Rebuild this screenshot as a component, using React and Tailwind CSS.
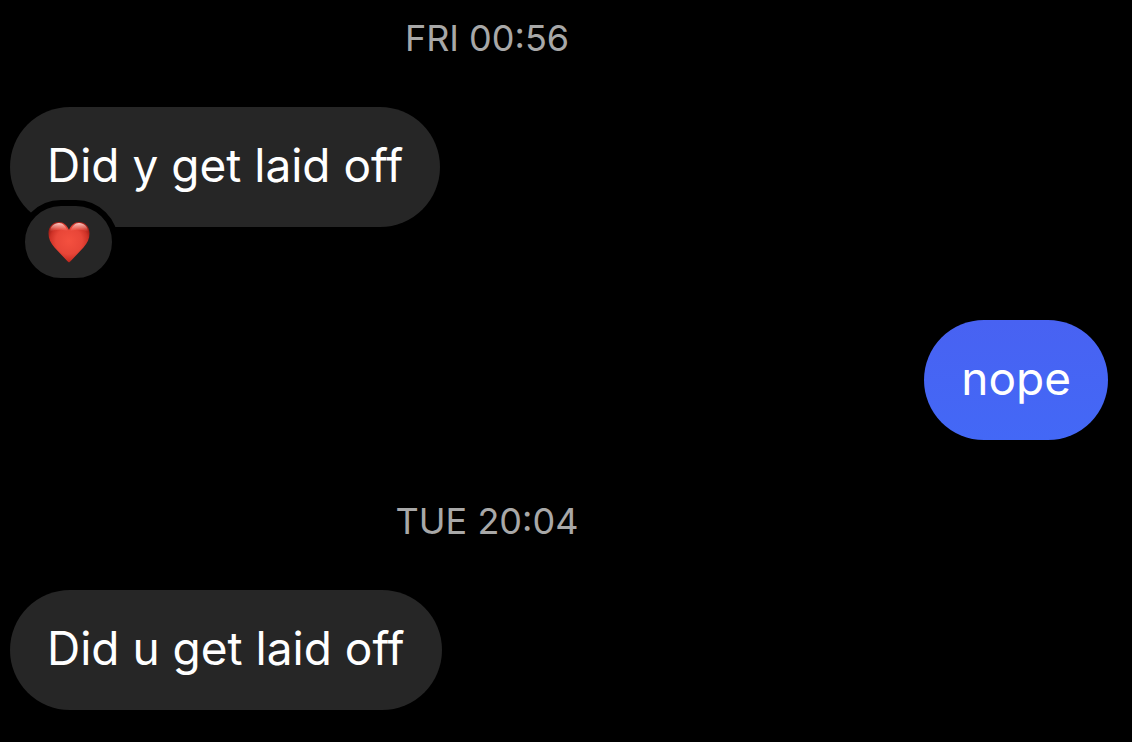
function Timestamp({ children }) {
  return (
    <time className="block pr-[144px] text-center text-[36px] leading-[40px] text-[#a8a8a8]">
      {children}
    </time>
  );
}

function Heart() {
  return (
    <svg viewBox="0 0 42 42" className="h-[42px] w-[42px]" role="img" aria-label="Heart">
      <defs>
        <radialGradient id="heartBody" gradientUnits="userSpaceOnUse" cx="21" cy="20" r="22">
          <stop offset="0" stopColor="#f4503f" />
          <stop offset="0.6" stopColor="#e84638" />
          <stop offset="0.85" stopColor="#cf3227" />
          <stop offset="1" stopColor="#a82018" />
        </radialGradient>
        <linearGradient id="heartShine" x1="0" y1="0" x2="0" y2="1">
          <stop offset="0" stopColor="#ffd8d2" stopOpacity="0.95" />
          <stop offset="0.5" stopColor="#fca79c" stopOpacity="0.55" />
          <stop offset="1" stopColor="#f4604f" stopOpacity="0" />
        </linearGradient>
      </defs>
      <path
        d="M21 41.300C20.300 41.300 19.700 40.700 19 39.800L6.500 26.500C2.500 22 0.500 17.500 0.500 12.500C0.500 5.500 5 1 11 1C15.500 1 19 4 21 9C23 4 26.500 1 31 1C37 1 41.500 5.500 41.500 12.500C41.500 17.500 39.500 22 35.500 26.500L23 39.800C22.300 40.700 21.700 41.300 21 41.300Z"
        fill="url(#heartBody)"
      />
      <path
        d="M2 11C2 5.500 6 2 11 2C15 2 18 5 19.500 10C16 8.500 7 7.500 2 11Z"
        fill="url(#heartShine)"
      />
      <path
        d="M40 11C40 5.500 36 2 31 2C27 2 24 5 22.500 10C26 8.500 35 7.500 40 11Z"
        fill="url(#heartShine)"
      />
    </svg>
  );
}

function Received({ children, reaction }) {
  return (
    <div className="relative w-fit rounded-[60px] bg-[#262626] px-[37px] pt-[30px] pb-[34px] text-[46px] leading-[56px] text-white">
      <p>{children}</p>
      {reaction && (
        <button
          type="button"
          className="absolute top-[93px] left-[9px] flex h-[84px] w-[99px] items-center justify-center rounded-[42px] border-6 border-black bg-[#262626]"
        >
          {reaction}
        </button>
      )}
    </div>
  );
}

export default function App() {
  return (
    <main className="min-h-screen bg-black pt-[18px] pr-6 pb-8 pl-[10px] font-['Inter',sans-serif]">
      <Timestamp>FRI 00:56</Timestamp>
      <div className="pt-[49px]">
        <Received reaction={<Heart />}>Did y get laid off</Received>
      </div>
      <div className="flex justify-end pt-[93px] pb-[61px]">
        <p className="rounded-[60px] bg-linear-to-b from-[#4862f2] to-[#4368f6] px-[37px] pt-[30px] pb-[34px] text-[46px] leading-[56px] text-white">
          nope
        </p>
      </div>
      <Timestamp>TUE 20:04</Timestamp>
      <div className="pt-[49px]">
        <Received>Did u get laid off</Received>
      </div>
    </main>
  );
}
